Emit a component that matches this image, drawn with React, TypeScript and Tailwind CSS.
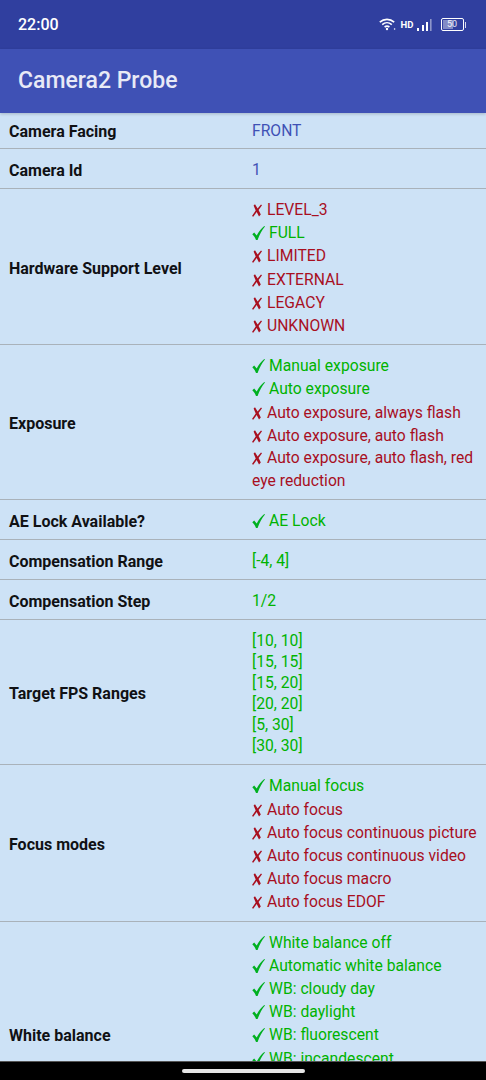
type Line = { kind: 'yes' | 'no' | 'plain'; text: string };

const yes = (text: string): Line => ({ kind: 'yes', text });
const no = (text: string): Line => ({ kind: 'no', text });
const plain = (text: string): Line => ({ kind: 'plain', text });

const rows: { label: string; lines: Line[] }[] = [
  {
    label: 'Hardware Support Level',
    lines: [no('LEVEL_3'), yes('FULL'), no('LIMITED'), no('EXTERNAL'), no('LEGACY'), no('UNKNOWN')],
  },
  {
    label: 'Exposure',
    lines: [
      yes('Manual exposure'),
      yes('Auto exposure'),
      no('Auto exposure, always flash'),
      no('Auto exposure, auto flash'),
      no('Auto exposure, auto flash, red eye reduction'),
    ],
  },
  { label: 'AE Lock Available?', lines: [yes('AE Lock')] },
  { label: 'Compensation Range', lines: [plain('[-4, 4]')] },
  { label: 'Compensation Step', lines: [plain('1/2')] },
  {
    label: 'Target FPS Ranges',
    lines: ['[10, 10]', '[15, 15]', '[15, 20]', '[20, 20]', '[5, 30]', '[30, 30]'].map(plain),
  },
  {
    label: 'Focus modes',
    lines: [
      yes('Manual focus'),
      no('Auto focus'),
      no('Auto focus continuous picture'),
      no('Auto focus continuous video'),
      no('Auto focus macro'),
      no('Auto focus EDOF'),
    ],
  },
  {
    label: 'White balance',
    lines: [
      yes('White balance off'),
      yes('Automatic white balance'),
      yes('WB: cloudy day'),
      yes('WB: daylight'),
      yes('WB: fluorescent'),
      yes('WB: incandescent'),
      yes('WB: shade'),
      yes('WB: twilight'),
      yes('WB: warm fluorescent'),
    ],
  },
];

function Value({ line }: { line: Line }) {
  if (line.kind === 'yes') {
    return (
      <div className="leading-[23.2px] text-[#00b300]">
        <svg className="inline align-[-2px] mr-[4px]" width="13" height="14" viewBox="0 0 13 14" fill="#00b020">
          <path d="M0.3 8.2 L2.2 6.6 L4.7 9.6 C6.6 5.8 9.3 2.4 12.3 0 L13 0.6 C10 4 7.6 8.8 5.6 14 L4 14 C3.2 11.6 1.8 9.8 0.3 8.2 Z" />
        </svg>
        {line.text}
      </div>
    );
  }
  if (line.kind === 'no') {
    // the one entry that wraps has slightly tighter lines
    const wraps = line.text.length > 30;
    return (
      <div className={`text-[#a80f1f] ${wraps ? 'leading-[22.6px]' : 'leading-[23.2px]'}`}>
        <svg className="inline align-[-2px] mr-[5px]" width="10" height="13" viewBox="0 0 10 13" fill="#a80f1f">
          <path d="M1.6 1.4 L3 0.2 L5.6 4.4 L9 0.4 L10 1.2 L6.6 6.1 L8.8 10.6 L7 12.6 L4.7 8 L1.2 12.8 L0 12 L3.7 6.4 Z" />
        </svg>
        {line.text}
      </div>
    );
  }
  return <div className="leading-[21px] text-[#00b300]">{line.text}</div>;
}

function Row({ label, tall, first, children }: { label: string; tall?: boolean; first?: boolean; children: React.ReactNode }) {
  const pad = first ? 'pt-[7px] pb-[7px]' : tall ? 'pt-[9px] pb-[7px]' : 'pt-[10px] pb-[8px]';
  return (
    <div className={`flex items-center border-b border-[#a9b2ba] ${pad}`}>
      <div className="w-[252px] pl-[9px] pt-[1px] text-[16px] leading-[19px] font-bold text-[#101114]">{label}</div>
      <div className="flex-1 pr-[6px]">{children}</div>
    </div>
  );
}

function StatusIcons() {
  return (
    <div className="flex items-center text-white">
      <svg width="17" height="13" viewBox="0 0 17 13" fill="none" stroke="white" strokeWidth="1.6">
        <path d="M0.8 4.2 C5 0.4 11 0.4 15.2 4.2" />
        <path d="M3.2 6.6 C6 4.2 10 4.2 12.8 6.6" />
        <path d="M5.6 9 C7 7.9 9 7.9 10.4 9" />
        <circle cx="8" cy="11" r="1.2" fill="white" stroke="none" />
        <circle cx="15.6" cy="11" r="0.8" fill="white" stroke="none" />
      </svg>
      <span className="ml-[5px] text-[9.5px] font-bold leading-none">HD</span>
      <svg className="ml-[2px]" width="16" height="14" viewBox="0 0 16 14" fill="white">
        <rect x="1" y="10" width="2" height="3" />
        <rect x="6" y="7" width="2" height="6" />
        <rect x="10" y="4" width="2" height="9" />
        <rect x="14" y="1" width="1.6" height="12" opacity="0.45" />
      </svg>
      <div className="relative ml-[9px] flex h-[13px] w-[23px] items-center justify-center rounded-[2px] border border-white">
        <div className="absolute bottom-[1px] left-[1px] top-[1px] w-[10px] bg-white/40" />
        <span className="relative text-[9px] leading-none text-white/90">50</span>
      </div>
      <div className="ml-[1px] h-[6px] w-[1.5px] bg-white/80" />
    </div>
  );
}

export default function App() {
  return (
    <div className="flex h-[1080px] w-[486px] flex-col overflow-hidden bg-[#cde2f6] font-['Roboto',sans-serif] text-[15.7px]">
      <div className="flex h-[49px] shrink-0 items-center justify-between bg-[#303f9f] pl-[18px] pr-[20px]">
        <span className="text-[16px] font-medium text-white">22:00</span>
        <StatusIcons />
      </div>
      <div className="relative flex h-[64px] shrink-0 items-center bg-[#3f51b5] pl-[18px] pt-[1px] text-[23px] font-medium text-[#e8eaf6] shadow-[0_1px_3px_rgba(0,0,0,0.2)]">
        Camera2 Probe
      </div>
      <div className="flex-1 overflow-hidden">
        <Row label="Camera Facing" first>
          <div className="leading-[21px] text-[#3f51b5]">FRONT</div>
        </Row>
        <Row label="Camera Id">
          <div className="leading-[21px] text-[#3f51b5]">1</div>
        </Row>
        {rows.map((r) => (
          <Row key={r.label} label={r.label} tall={r.lines[0].kind !== 'plain'}>
            {r.lines.map((line) => (
              <Value key={line.text} line={line} />
            ))}
          </Row>
        ))}
      </div>
      <div className="flex h-[19px] shrink-0 items-center justify-center border-t border-[#555] bg-black">
        <div className="h-[4px] w-[123px] rounded-full bg-[#e6e6e6]" />
      </div>
    </div>
  );
}
